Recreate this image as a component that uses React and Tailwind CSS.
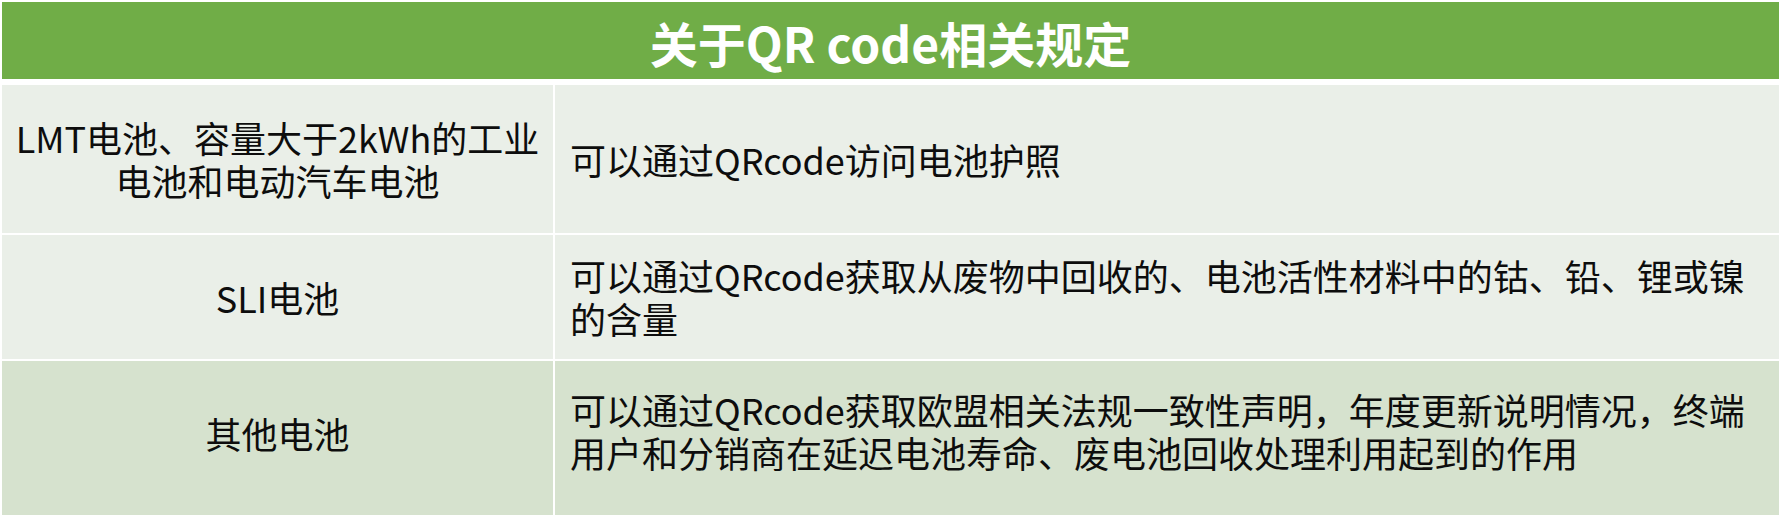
export default function App() {
  const font = { fontFamily: '"Noto Sans CJK SC", "Noto Sans", sans-serif' };
  return (
    <div className="w-[1782px] h-[518px] bg-white pt-[2px] pl-[2px]" style={font}>
      <div className="w-[1777px] flex flex-col">
        <div className="h-[77px] bg-[#70ad47] flex items-center justify-center text-white font-bold text-[48px] leading-none pt-[2px]">
          关于QR code相关规定
        </div>
        <div className="mt-[6px] flex flex-col gap-[2px] text-[36px] leading-[43px] text-[#0d0d0d]">
          <div className="h-[148px] flex gap-[2px]">
            <div className="w-[551px] bg-[#eaefe8] flex items-center justify-center text-center">
              <span>LMT电池、容量大于2kWh的工业<br />电池和电动汽车电池</span>
            </div>
            <div className="flex-1 bg-[#eaefe8] flex items-center pl-[15px]">
              <span>可以通过QRcode访问电池护照</span>
            </div>
          </div>
          <div className="h-[124px] flex gap-[2px]">
            <div className="w-[551px] bg-[#eaefe8] flex items-center justify-center text-center">
              <span>SLI电池</span>
            </div>
            <div className="flex-1 bg-[#eaefe8] flex items-center pl-[15px]">
              <span>可以通过QRcode获取从废物中回收的、电池活性材料中的钴、铅、锂或镍<br />的含量</span>
            </div>
          </div>
          <div className="h-[154px] flex gap-[2px]">
            <div className="w-[551px] bg-[#d6e2ce] flex items-center justify-center text-center pb-[10px]">
              <span>其他电池</span>
            </div>
            <div className="flex-1 bg-[#d6e2ce] flex items-center pl-[15px] pb-[14px]">
              <span>可以通过QRcode获取欧盟相关法规一致性声明，年度更新说明情况，终端<br />用户和分销商在延迟电池寿命、废电池回收处理利用起到的作用</span>
            </div>
          </div>
        </div>
      </div>
    </div>
  );
}
